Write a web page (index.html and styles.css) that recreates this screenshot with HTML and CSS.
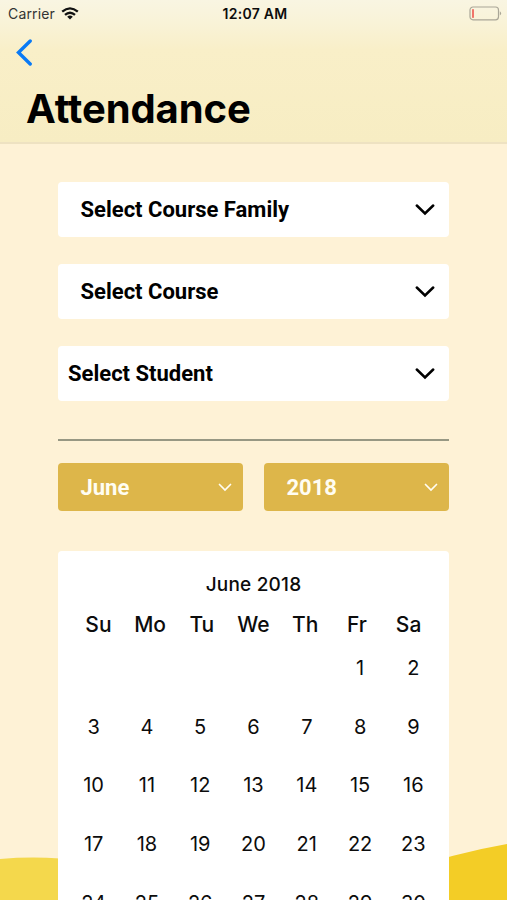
FILE: index.html
```html
<!DOCTYPE html>
<html lang="en">
<head>
    <meta charset="UTF-8">
    <meta name="viewport" content="width=device-width, initial-scale=1.0">
    <title>Attendance</title>
    <link rel="stylesheet" href="styles.css">
</head>
<body>
    <div class="screen">
        <svg class="waves" width="507" height="60" viewBox="0 0 507 60">
            <path d="M0 19 Q30 16.500 60 18.500 L120 30 V60 H0 Z" fill="#f4d84c"/>
            <path d="M400 32 Q455 13 507 4 V60 H400 Z" fill="#f3cd26"/>
        </svg>

        <header class="header">
            <div class="status-bar">
                <div class="carrier">
                    <span>Carrier</span>
                    <svg width="18" height="13" viewBox="0 0 18 13" fill="none" stroke="#111" stroke-width="2.300">
                        <path d="M1.200 4.700 Q9 -2 16.800 4.700"/>
                        <path d="M4 7.900 Q9 3.500 14 7.900"/>
                        <path d="M9 12.500 L6.200 9.700 Q9 7.500 11.800 9.700 Z" fill="#111" stroke="none"/>
                    </svg>
                </div>
                <div class="time">12:07 AM</div>
                <svg class="battery" width="33" height="15" viewBox="0 0 33 15">
                    <rect x="1" y="1" width="28.500" height="12.800" rx="3" fill="none" stroke="#aaa697" stroke-width="1.200"/>
                    <rect x="3" y="3" width="2" height="9" rx="0.800" fill="#f0756a"/>
                    <path d="M30.800 5.200 Q33.500 7.400 30.800 9.600 Z" fill="#aaa697"/>
                </svg>
            </div>
            <a class="back" href="#" aria-label="Back">
                <svg width="18" height="28" viewBox="0 0 18 28">
                    <path d="M14.200 3 L2.500 14.500 L14.200 26" fill="none" stroke="#0a7af5" stroke-width="3.400" stroke-linecap="round" stroke-linejoin="miter"/>
                </svg>
            </a>
            <h1 class="title">Attendance</h1>
        </header>

        <main class="content">
            <div class="select">
                <span>Select Course Family</span>
                <svg class="arrow" viewBox="0 0 20 12"><path d="M1.800 1.500 L10 9.500 L18.200 1.500"/></svg>
            </div>
            <div class="select">
                <span>Select Course</span>
                <svg class="arrow" viewBox="0 0 20 12"><path d="M1.800 1.500 L10 9.500 L18.200 1.500"/></svg>
            </div>
            <div class="select student">
                <span>Select Student</span>
                <svg class="arrow" viewBox="0 0 20 12"><path d="M1.800 1.500 L10 9.500 L18.200 1.500"/></svg>
            </div>

            <div class="line"></div>

            <div class="filters">
                <div class="filter">
                    <span>June</span>
                    <svg class="arrow-small" viewBox="0 0 14 9"><path d="M1.500 1.500 L7 7 L12.500 1.500"/></svg>
                </div>
                <div class="filter">
                    <span>2018</span>
                    <svg class="arrow-small" viewBox="0 0 14 9"><path d="M1.500 1.500 L7 7 L12.500 1.500"/></svg>
                </div>
            </div>

            <section class="calendar">
                <h2 class="month">June 2018</h2>
                <div class="weekdays">
                    <span>Su</span><span>Mo</span><span>Tu</span><span>We</span><span>Th</span><span>Fr</span><span>Sa</span>
                </div>
                <div class="days">
                    <span class="first">1</span><span>2</span>
                    <span>3</span><span>4</span><span>5</span><span>6</span><span>7</span><span>8</span><span>9</span>
                    <span>10</span><span>11</span><span>12</span><span>13</span><span>14</span><span>15</span><span>16</span>
                    <span>17</span><span>18</span><span>19</span><span>20</span><span>21</span><span>22</span><span>23</span>
                    <span>24</span><span>25</span><span>26</span><span>27</span><span>28</span><span>29</span><span>30</span>
                </div>
            </section>
        </main>
    </div>
</body>
</html>
```
FILE: styles.css
```css
* {
    box-sizing: border-box;
}
body {
    margin: 0;
    font-family: Inter, sans-serif;
    color: #0c0c0c;
}
.screen {
    position: relative;
    height: 900px;
    overflow: hidden;
    background-color: #fef2d6;
}
.waves {
    position: absolute;
    left: 0;
    bottom: 0;
}
.header {
    height: 144px;
    background: linear-gradient(#f9f5e2 0, #f9f3d8 22px, #f9efc8 50px, #f7edc3 100%);
    border-bottom: 2px solid #eee2c2;
}
.status-bar {
    display: grid;
    grid-template-columns: 1fr auto 1fr;
    align-items: center;
    height: 26px;
    padding: 0 5px 0 8px;
    font-size: 14px;
}
.carrier {
    display: flex;
    align-items: center;
    gap: 6px;
    color: #333;
    letter-spacing: 0.15px;
}
.time {
    font-weight: 600;
    letter-spacing: 0.3px;
}
.battery {
    justify-self: end;
}
.back {
    display: block;
    width: 18px;
    height: 28px;
    margin: 12px 0 0 16px;
}
.title {
    margin: 18px 0 0 26px;
    font-size: 40px;
    line-height: 50px;
    font-weight: 700;
    letter-spacing: -0.1px;
    color: #000;
}
.content {
    position: relative;
    padding: 38px 58px 0;
}
.select {
    display: flex;
    align-items: center;
    justify-content: space-between;
    height: 55px;
    margin-bottom: 27px;
    padding: 0 14px 0 22.5px;
    border-radius: 4px;
    background-color: #fff;
    color: #000;
    font: 700 22px Roboto, sans-serif;
}
.student {
    padding-left: 10px;
}
.arrow {
    width: 20px;
    height: 12px;
    fill: none;
    stroke: #000;
    stroke-width: 2.5;
    stroke-linecap: round;
}
.line {
    height: 2px;
    margin-top: 38px;
    background-color: #979883;
}
.filters {
    display: grid;
    grid-template-columns: 1fr 1fr;
    gap: 21px;
    margin-top: 22px;
}
.filter {
    display: flex;
    align-items: center;
    justify-content: space-between;
    height: 48px;
    padding: 0 11px 0 22.5px;
    border-radius: 4px;
    background-color: #ddb64a;
    color: #fffdf2;
    font: 700 22px Roboto, sans-serif;
}
.arrow-small {
    width: 14px;
    height: 9px;
    fill: none;
    stroke: #fffdf2;
    stroke-width: 1.7;
    stroke-linecap: round;
}
.calendar {
    height: 420px;
    margin-top: 40px;
    padding-top: 20px;
    border-radius: 4px;
    background-color: #fff;
}
.month {
    margin: 0;
    font-size: 19px;
    line-height: 28px;
    font-weight: 500;
    letter-spacing: 0.2px;
    text-align: center;
}
.weekdays {
    display: grid;
    grid-template-columns: repeat(7, 51.7px);
    justify-content: center;
    margin-top: 11px;
    font-size: 21px;
    line-height: 29px;
    font-weight: 550;
    text-align: center;
}
.days {
    display: grid;
    grid-template-columns: repeat(7, 53.3px);
    grid-auto-rows: 58.6px;
    justify-content: center;
    align-items: center;
    font-size: 20px;
    text-align: center;
}
.first {
    grid-column: 6;
}
```
